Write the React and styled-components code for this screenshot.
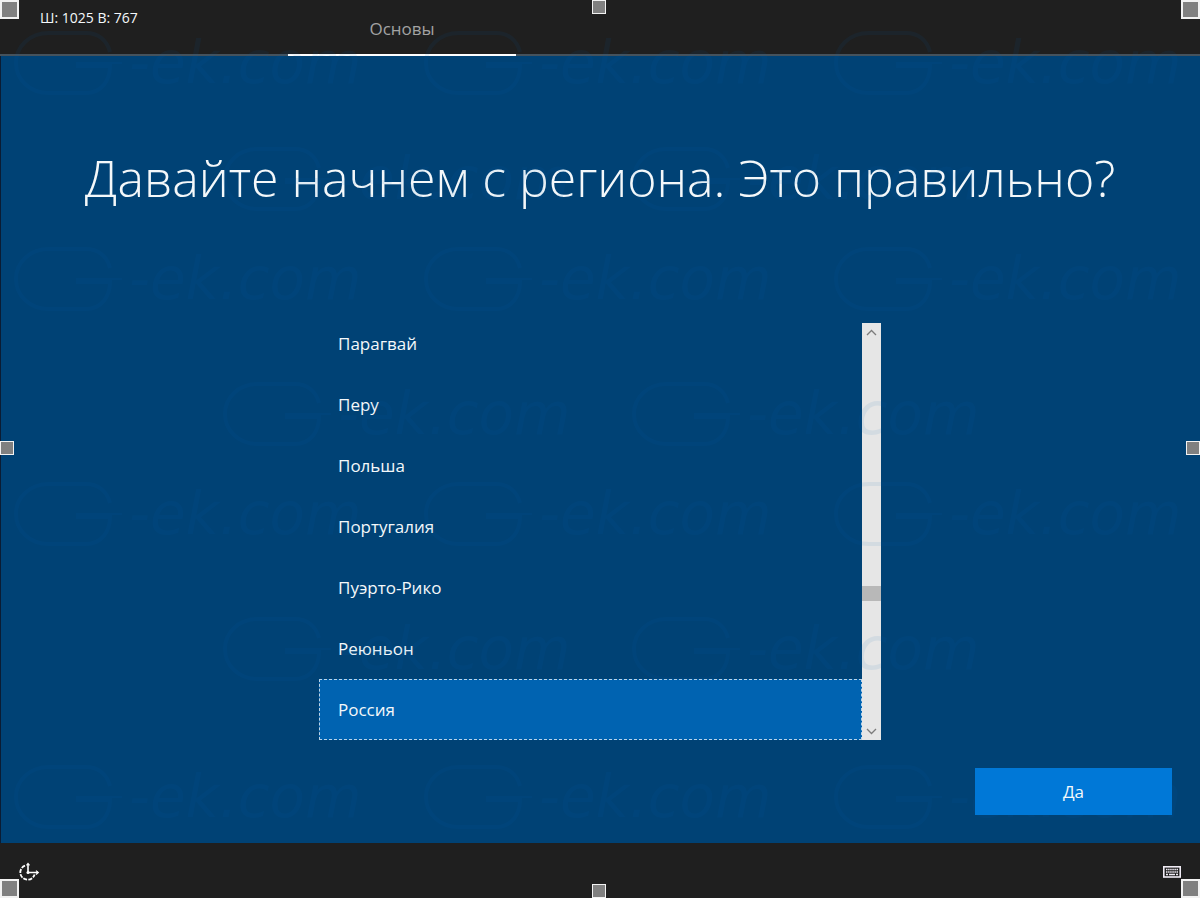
import {useState} from 'react';
import styled, {createGlobalStyle} from 'styled-components';

const colors = {
  bar: '#1f1f1f',
  page: '#004275',
  selected: '#0063b1',
  accent: '#0078d7',
};

const GlobalStyle = createGlobalStyle`
  * {
    box-sizing: border-box;
  }
  body {
    margin: 0;
    color: #f4f8fa;
    font-family: 'Open Sans', 'Noto Sans', sans-serif;
    font-size: 17px;
    line-height: 24px;
  }
`;

const Wrapper = styled.div`
  position: relative;
  display: flex;
  flex-direction: column;
  min-height: 100vh;
  overflow: hidden;
  background-color: ${colors.page};
  box-shadow: inset 1px 0 #0b1c33;
`;
const TopBar = styled.header`
  display: flex;
  flex: none;
  height: 56px;
  background-color: ${colors.bar};
  border-bottom: 2px solid #45525c;
`;
const SizeLabel = styled.div`
  width: 24%;
  padding: 6px 0 0 40px;
  font-size: 14px;
`;
const Tab = styled.a`
  width: 19%;
  height: 56px;
  padding-top: 17px;
  border-bottom: 2px solid #ffffff;
  color: #a3a3a3;
  text-align: center;
  text-decoration: none;
`;
const Content = styled.main`
  display: flex;
  flex: 1;
  flex-direction: column;
  align-items: center;
  padding: 82px 28px 28px;
`;
const Title = styled.h1`
  margin: 0;
  font-size: 50px;
  font-weight: 300;
  line-height: 80px;
  text-align: center;
`;
const Picker = styled.div`
  display: flex;
  width: 100%;
  max-width: 562px;
  height: 417px;
  margin: 105px 0 28px;
`;
const Regions = styled.div`
  display: flex;
  flex: 1;
  flex-direction: column;
  justify-content: flex-end;
  overflow: hidden;
`;
const Region = styled.label`
  display: flex;
  flex: none;
  align-items: center;
  height: 61px;
  padding-left: 18px;
  border: 1px dashed ${(props) => (props.$selected ? '#b9d3e8' : 'transparent')};
  background-color: ${(props) => (props.$selected ? colors.selected : 'transparent')};
`;
const Radio = styled.input`
  appearance: none;
  width: 0;
  height: 0;
  margin: 0;
  outline: none;
`;
const ScrollBar = styled.div`
  display: flex;
  flex-direction: column;
  width: 19px;
  background-color: #e6e6e6;
`;
const ScrollButton = styled.button`
  display: flex;
  align-items: center;
  justify-content: center;
  width: 100%;
  height: 18px;
  padding: 0;
  border: 0;
  background: none;
`;
const Track = styled.div`
  flex: 1;
  padding-top: 245px;
`;
const Thumb = styled.div`
  height: 15px;
  background-color: #b8b8b8;
`;
const YesButton = styled.button`
  z-index: 1;
  align-self: flex-end;
  width: 197px;
  height: 47px;
  border: 0;
  background-color: ${colors.accent};
  color: #f4f8fa;
  font: inherit;
`;
const BottomBar = styled.footer`
  display: flex;
  flex: none;
  align-items: center;
  justify-content: space-between;
  height: 55px;
  padding: 3px 19px 0 18px;
  background-color: ${colors.bar};
`;
const IconButton = styled.button`
  display: flex;
  padding: 0;
  border: 0;
  background: none;
`;

const Handle = styled.div`
  position: absolute;
  width: ${(props) => props.$size}px;
  height: ${(props) => props.$size}px;
  border: ${(props) => (props.$size > 14 ? 2 : 1)}px solid #f2f2f2;
  background-color: #808080;
  ${(props) => props.$place}
`;
const Watermark = styled.div`
  position: absolute;
  top: ${(props) => props.$top}px;
  left: ${(props) => props.$left}px;
  display: flex;
  align-items: center;
  height: 66px;
  color: #0064b4;
  font-family: 'DejaVu Sans', sans-serif;
  font-size: 58px;
  font-style: italic;
  font-weight: 200;
  line-height: 66px;
  opacity: 0.08;
  pointer-events: none;
  white-space: nowrap;
  user-select: none;
`;

const Chevron = ({d}) => (
  <svg width="11" height="7" viewBox="0 0 11 7" fill="none" stroke="#7c7c7c" strokeWidth="1.3">
    <path d={d} />
  </svg>
);

const EaseIcon = () => (
  <svg width="22" height="20" viewBox="0 0 22 20" fill="none" stroke="#ffffff">
    <path d="M7 3.6A7.3 7.3 0 1 0 16.6 12.5" strokeWidth="1.8" strokeDasharray="4 1.2" />
    <path d="M10 2v8.500h10" strokeWidth="1.6" />
    <path d="M8.500 3.300 10 1.500 11.500 3.300M18 8.600l2.300 1.900-2.300 2" strokeWidth="1.2" />
    <circle cx="10" cy="10.5" r="1.5" fill="#ffffff" stroke="none" />
  </svg>
);

const KeyboardIcon = () => (
  <svg width="18" height="12" viewBox="0 0 18 12" fill="none" stroke="#f0ecf5">
    <rect x=".8" y=".8" width="16.4" height="10.2" strokeWidth="1.6" />
    <path d="M3 3.5h12M3 6h12" strokeWidth="1.5" strokeDasharray="1.5 .6" />
    <path d="M3 8.6h2M6 8.6h6M13 8.6h2" strokeWidth="1.5" />
  </svg>
);

const Logo = () => (
  <svg width="116" height="66" viewBox="0 0 116 66" fill="none" stroke="currentColor" strokeWidth="4">
    <path d="M97 22C94 10 85 3 73 3H36C16 3 3 17 3 33s13 30 33 30h37c15 0 24-12 24-27H63" />
    <path d="M63 33h46" strokeWidth="2" />
  </svg>
);

const regions = ['Парагвай', 'Перу', 'Польша', 'Португалия', 'Пуэрто-Рико', 'Реюньон', 'Россия'];

const even = [13, 423, 833];
const odd = [222, 631];
const marks = [
  {top: 30, lefts: even},
  {top: 146, lefts: odd},
  {top: 246, lefts: even},
  {top: 381, lefts: odd},
  {top: 481, lefts: even},
  {top: 616, lefts: odd},
  {top: 764, lefts: even},
];

const handles = [
  {size: 19, place: 'top: 0; left: 0;'},
  {size: 14, place: 'top: 0; left: calc(50% - 8px);'},
  {size: 19, place: 'top: 0; right: 0;'},
  {size: 14, place: 'top: calc(50% - 8px); left: 0;'},
  {size: 14, place: 'top: calc(50% - 8px); right: 0;'},
  {size: 19, place: 'bottom: 0; left: 0;'},
  {size: 14, place: 'bottom: 0; left: calc(50% - 8px);'},
  {size: 19, place: 'bottom: 0; right: 0;'},
];

const RegionPicker = () => {
  const [selected, setSelected] = useState('Россия');
  return (
    <Picker>
      <Regions role="radiogroup" aria-labelledby="title">
        {regions.map((region) => (
          <Region key={region} $selected={region === selected}>
            <Radio
              type="radio"
              name="region"
              checked={region === selected}
              onChange={() => setSelected(region)}
            />
            {region}
          </Region>
        ))}
      </Regions>
      <ScrollBar>
        <ScrollButton aria-label="Вверх">
          <Chevron d="M1 6l4.500-4.500L10 6" />
        </ScrollButton>
        <Track>
          <Thumb />
        </Track>
        <ScrollButton aria-label="Вниз">
          <Chevron d="M1 1l4.500 4.500L10 1" />
        </ScrollButton>
      </ScrollBar>
    </Picker>
  );
};

const App = () => {
  return (
    <Wrapper>
      <GlobalStyle />
      <TopBar>
        <SizeLabel>Ш: 1025 В: 767</SizeLabel>
        <Tab href="#basics">Основы</Tab>
      </TopBar>
      <Content>
        <Title id="title">Давайте начнем с региона. Это правильно?</Title>
        <RegionPicker />
        <YesButton>Да</YesButton>
      </Content>
      <BottomBar>
        <IconButton aria-label="Специальные возможности">
          <EaseIcon />
        </IconButton>
        <IconButton aria-label="Клавиатура">
          <KeyboardIcon />
        </IconButton>
      </BottomBar>
      {marks.map(({top, lefts}) =>
        lefts.map((left) => (
          <Watermark key={`${top}-${left}`} $top={top} $left={left} aria-hidden="true">
            <Logo />
            -ek.com
          </Watermark>
        ))
      )}
      {handles.map(({size, place}) => (
        <Handle key={place} $size={size} $place={place} />
      ))}
    </Wrapper>
  );
};

export default App;
